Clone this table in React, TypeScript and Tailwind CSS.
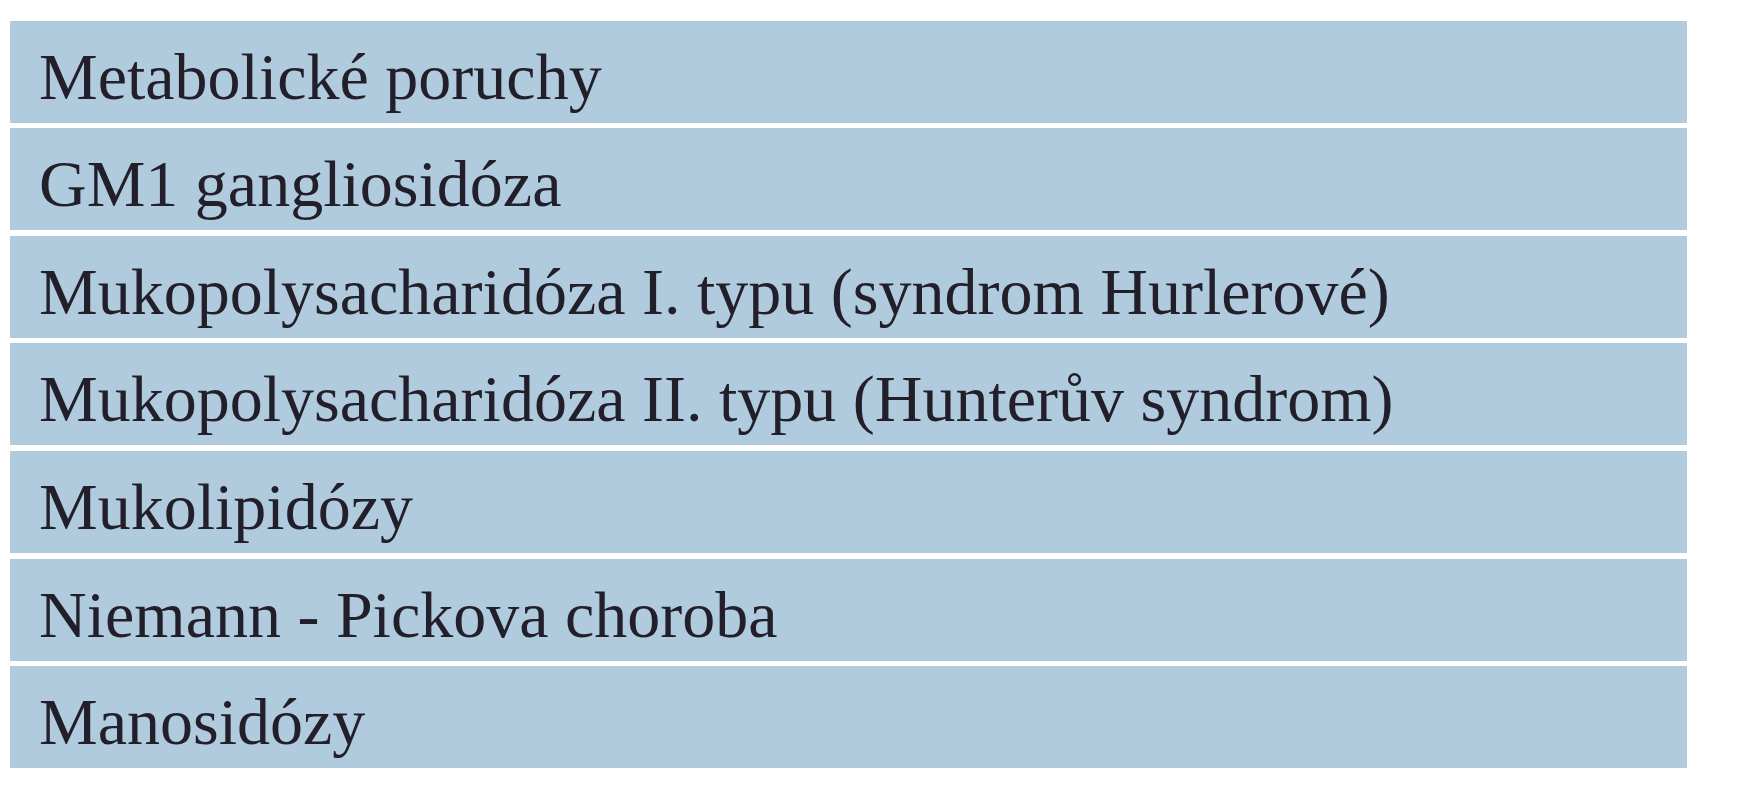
const rows = [
  "Metabolické poruchy",
  "GM1 gangliosidóza",
  "Mukopolysacharidóza I. typu (syndrom Hurlerové)",
  "Mukopolysacharidóza II. typu (Hunterův syndrom)",
  "Mukolipidózy",
  "Niemann - Pickova choroba",
  "Manosidózy",
];

export default function App() {
  return (
    <div className="h-[800px] w-full bg-white pt-[20.7px] pl-[10px]">
      {/* tabulka metabolických poruch */}
      <div className="flex w-[1677px] flex-col gap-[5.6px]">
        {rows.map((label) => (
          <div
            key={label}
            className="h-[102px] bg-[#b0cbdd] pl-[29px] pt-[23px] text-[66px] leading-none text-[#231f2a] font-['Liberation_Serif',serif]"
          >
            {label}
          </div>
        ))}
      </div>
    </div>
  );
}
